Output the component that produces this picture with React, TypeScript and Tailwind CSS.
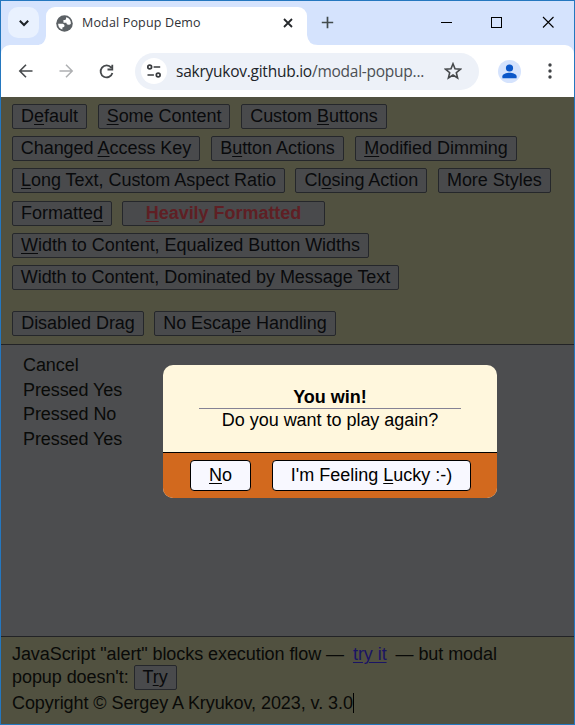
import React from "react";

type Item = { t: string; k?: number; w: string; hot?: boolean };

const rows: { cls: string; items: Item[] }[] = [
  { cls: "mt-[7px] gap-[11px]", items: [{ t: "Default", k: 1, w: "w-[75px]" }, { t: "Some Content", k: 0, w: "w-[132px]" }, { t: "Custom Buttons", k: 7, w: "w-[146px]" }] },
  { cls: "mt-[7px] gap-[11px]", items: [{ t: "Changed Access Key", k: 8, w: "w-[188px]" }, { t: "Button Actions", k: 1, w: "w-[133px]" }, { t: "Modified Dimming", k: 0, w: "w-[162px]" }] },
  { cls: "mt-[7px] gap-[10.4px]", items: [{ t: "Long Text, Custom Aspect Ratio", k: 0, w: "w-[273px]" }, { t: "Closing Action", k: 2, w: "w-[132px]" }, { t: "More Styles", w: "w-[113px]" }] },
  { cls: "mt-[8px] gap-[10px]", items: [{ t: "Formatted", k: 8, w: "w-[100px]" }, { t: "Heavily Formatted", k: 0, w: "w-[203px]", hot: true }] },
  { cls: "mt-[7px]", items: [{ t: "Width to Content, Equalized Button Widths", k: 0, w: "w-[357px]" }] },
  { cls: "mt-[7px]", items: [{ t: "Width to Content, Dominated by Message Text", w: "w-[387px]" }] },
  { cls: "mt-[21px] gap-[10px]", items: [{ t: "Disabled Drag", w: "w-[132px]" }, { t: "No Escape Handling", k: 7, w: "w-[182px]" }] },
];

function Label({ t, k }: { t: string; k?: number }) {
  if (k === undefined) return <>{t}</>;
  return (
    <>
      {t.slice(0, k)}
      <span className="underline decoration-1 underline-offset-2">{t[k]}</span>
      {t.slice(k + 1)}
    </>
  );
}

function DimButton({ t, k, w, hot }: Item) {
  return (
    <button
      className={`${w} ${hot ? "font-bold text-[#5f1f24]" : "text-[#090a0c]"} flex h-[25px] shrink-0 items-center justify-center whitespace-nowrap rounded-[2px] border border-[#25272b] bg-[#494a4c] leading-[23px] tracking-[-.03px]`}
    >
      <span><Label t={t} k={k} /></span>
    </button>
  );
}

function TabStrip() {
  return (
    <div className="flex h-[44px] bg-[#d5e3fd]">
      <div className="mt-[6px] ml-[7px] flex h-[31px] w-[31px] items-center justify-center rounded-[10px] bg-[#e9f1fe]">
        <svg width="12" height="12" viewBox="0 0 12 12" fill="none" stroke="#1d2227" strokeWidth="2"><path d="M1.8 3.8 6 8l4.2-4.2" /></svg>
      </div>
      <div className="flex w-[7px] items-end">
        <svg width="7" height="9" viewBox="0 0 7 9"><path d="M7 0v9H-2Q6 9 7 0" fill="#fff" /></svg>
      </div>
      <div className="mt-[6px] flex h-[38px] w-[261px] items-center rounded-t-[9px] bg-white pb-[6px]">
        <svg className="ml-[10px]" width="17" height="17" viewBox="0 0 16 16">
          <circle cx="8" cy="8" r="7.8" fill="#5c6165" />
          <path d="M2 8.2h3.2c1.8 0 2.8.6 2.8 1.9 0 1.2-.8 1.6-2 1.6v2A6 6 0 0 1 2 8.2Z" fill="#fff" />
          <path d="M9.5 2.1A6 6 0 0 1 14 8c-.5 1-1.3 1.2-2.2 1.2-1.4 0-2-.8-2-1.9H7V4.6h1.5c.7 0 1-.9 1-2.5Z" fill="#fff" />
        </svg>
        <span className="ml-[9px] whitespace-nowrap font-['Open_Sans','Noto_Sans',sans-serif] text-[12.5px] tracking-[.16px] text-[#303236]">Modal Popup Demo</span>
        <svg className="ml-auto mr-[14px]" width="10" height="10" viewBox="0 0 10 10" stroke="#25282b" strokeWidth="1.8"><path d="m1 1 8 8M9 1 1 9" /></svg>
      </div>
      <div className="flex w-[13px] items-end">
        <svg width="11" height="10" viewBox="0 0 11 10"><path d="M0 0v10h11Q1 10 0 0" fill="#fff" /></svg>
      </div>
      <svg className="mt-[15px] ml-[1px]" width="13" height="13" viewBox="0 0 13 13" stroke="#424b4d" strokeWidth="1.7"><path d="M6.5 .8v11.4M.8 6.5h11.4" /></svg>
      <svg className="mt-[15px] ml-[107px]" width="12" height="13" viewBox="0 0 12 13" stroke="#000" shapeRendering="crispEdges"><path d="M0 6.5h11" /></svg>
      <svg className="mt-[15px] ml-[37px]" width="13" height="13" viewBox="0 0 13 13" fill="none" stroke="#000" shapeRendering="crispEdges"><path d="M1.5 1.5h10v10h-10z" /></svg>
      <svg className="mt-[15px] ml-[39px]" width="13" height="13" viewBox="0 0 13 13" stroke="#000" strokeWidth="1.1"><path d="m1 1 10.5 10.5M11.5 1 1 11.5" /></svg>
    </div>
  );
}

function Toolbar() {
  return (
    <div className="flex h-[52px] items-center bg-[#d5e3fd]">
      <div className="flex h-full w-full items-center rounded-t-[9px] bg-white">
        <svg className="ml-[17px]" width="16" height="16" viewBox="0 0 16 16" fill="none" stroke="#46494c" strokeWidth="1.6"><path d="M14.5 8H2M8 1.8 1.8 8 8 14.2" /></svg>
        <svg className="ml-[24px]" width="16" height="16" viewBox="0 0 16 16" fill="none" stroke="#aeb0b2" strokeWidth="1.5"><path d="M1.5 8H14M8 1.8 14.2 8 8 14.2" /></svg>
        <svg className="ml-[24px]" width="17" height="17" viewBox="0 0 17 17" fill="none" stroke="#46494c" strokeWidth="1.8"><path d="M13.3 4.6A6 6 0 1 0 14.4 10M14.3 1.7v4.8H9.5" /></svg>
        <div className="ml-[20px] flex h-[37px] w-[344px] items-center rounded-full bg-[#edf1f8]">
          <div className="ml-[6px] flex h-[26px] w-[26px] items-center justify-center rounded-full bg-white">
            <svg width="16" height="14" viewBox="0 0 16 14" fill="none" stroke="#383b3e" strokeWidth="1.7"><circle cx="3.7" cy="3" r="1.9" /><circle cx="12.2" cy="11" r="1.9" /><path d="M7.6 3h6.6M1.5 11h6.4" /></svg>
          </div>
          <span className="ml-[9px] mt-[2px] w-[250px] whitespace-nowrap font-['Open_Sans','Noto_Sans',sans-serif] text-[15.5px] tracking-[-.25px] text-[#4b4f54]"><span className="text-[#202429]">sakryukov.github.io</span>/modal-popup...</span>
          <svg className="ml-[18px] shrink-0" width="18" height="18" viewBox="0 0 18 18" fill="none" stroke="#46494c" strokeWidth="1.6"><path d="m9 1.8 2 5 5.4.4-4.1 3.5 1.3 5.2L9 13l-4.6 2.9 1.3-5.2-4.1-3.5L7 6.8Z" /></svg>
        </div>
        <div className="ml-[19px] flex h-[23px] w-[23px] items-center justify-center rounded-full bg-[#d5e3fd]">
          <svg width="15" height="15" viewBox="0 0 15 15" fill="#0b57c9"><circle cx="7.5" cy="4" r="3.6" /><path d="M.4 14.2v-2c0-2 4-3.4 7.1-3.4s7.1 1.4 7.1 3.4v2Z" /></svg>
        </div>
        <svg className="ml-[27px]" width="4" height="16" viewBox="0 0 4 16" fill="#404346"><circle cx="2" cy="2" r="1.7" /><circle cx="2" cy="8" r="1.7" /><circle cx="2" cy="14" r="1.7" /></svg>
      </div>
    </div>
  );
}

function Dialog() {
  return (
    <div className="absolute left-[162px] top-[364px] flex h-[133px] w-[334px] flex-col overflow-hidden rounded-[10px] bg-[#fff7dd] text-black">
      <div className="flex h-[88px] flex-col items-center border-b border-black">
        <div className="mt-[21px] font-bold leading-[22px]">You win!</div>
        <div className="h-px w-[262px] bg-[#858294]" />
        <div className="leading-[22px] tracking-[-.03px]">Do you want to play again?</div>
      </div>
      <div className="flex h-[45px] gap-[21px] bg-[#d2691e] pt-[7px] pl-[27px]">
        <button className="flex h-[31px] w-[61px] items-center justify-center rounded-[4px] border border-black bg-[#f8f8ff]"><span><Label t="No" k={0} /></span></button>
        <button className="flex h-[31px] w-[199px] items-center justify-center rounded-[4px] border border-black bg-[#f8f8ff]"><span><Label t="I'm Feeling Lucky :-)" k={12} /></span></button>
      </div>
    </div>
  );
}

export default function App() {
  return (
    <div className="relative flex h-[725px] w-[575px] flex-col overflow-hidden border border-[#2477bf] font-['Liberation_Sans',Arial,sans-serif] text-[18px] text-[#090a08]">
      <TabStrip />
      <Toolbar />
      <div className="h-[248px] shrink-0 border-b border-[#222326] bg-[#515140] pl-[11px]">
        {rows.map((r, i) => (
          <div key={i} className={`${r.cls} flex`}>
            {r.items.map((b) => <DimButton key={b.t} {...b} />)}
          </div>
        ))}
      </div>
      <div className="h-[292px] shrink-0 border-b border-[#222326] bg-[#4c4d4f] pt-[8px] pl-[22px] leading-[24.6px] tracking-[-.08px]">
        <div>Cancel</div>
        <div>Pressed Yes</div>
        <div>Pressed No</div>
        <div>Pressed Yes</div>
      </div>
      <div className="flex-1 bg-[#515140] pl-[11px] tracking-[-.07px]">
        <div className="mt-[6px] h-[22px] whitespace-pre leading-[22px]">JavaScript "alert" blocks execution flow —<span className="mx-[9px] text-[#1a1464] underline decoration-1 underline-offset-2">try it</span>— but modal</div>
        <div className="flex h-[25px] items-center gap-[5px] leading-[22px]"><span className="-mt-px">popup doesn't:</span><DimButton t="Try" k={1} w="w-[43px]" /></div>
        <div className="mt-[3px] flex h-[20px] items-center leading-[20px]">Copyright © Sergey A Kryukov, 2023, v. 3.0<span className="h-[20px] w-px bg-black" /></div>
      </div>
      <Dialog />
    </div>
  );
}
